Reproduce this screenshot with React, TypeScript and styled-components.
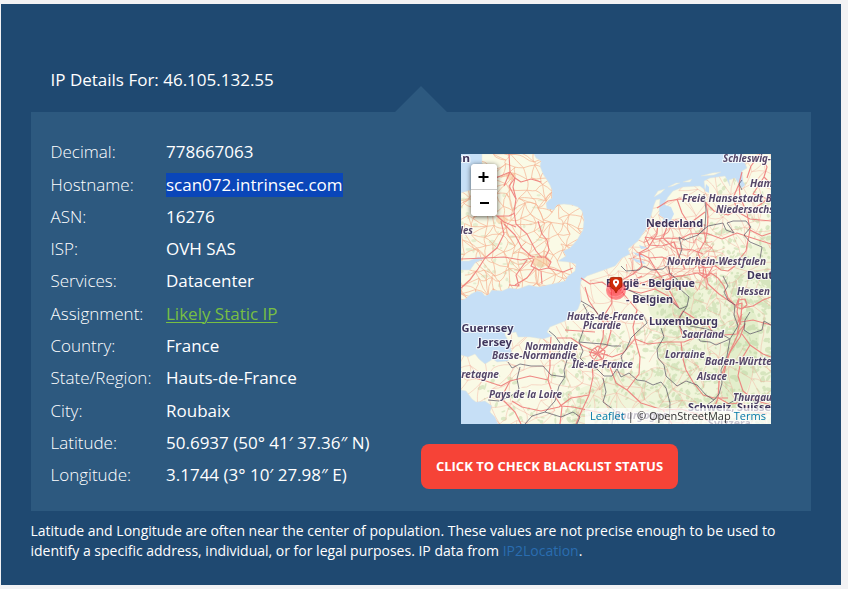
import React from "react";
import styled, { createGlobalStyle, css } from "styled-components";

const GlobalStyle = createGlobalStyle`
  * { box-sizing: border-box; }
  html, body { margin: 0; padding: 0; background: #f2f2f4; }
  body { font-family: "Open Sans", "Noto Sans", sans-serif; color: #fff; }
`;

const Page = styled.main`
  width: 848px;
  height: 589px;
  padding: 4px 7px 4px 1px;
  overflow: hidden;
`;

const Section = styled.section`
  height: 581px;
  padding: 0 30px;
  background: #1f4971;
`;

const Heading = styled.h1`
  height: 108px;
  margin: 0;
  padding: 64px 0 0 19.5px;
  font-size: 17px;
  line-height: 24px;
  font-weight: 400;
  white-space: nowrap;
`;

const Panel = styled.div`
  position: relative;
  display: flex;
  height: 399px;
  background: #2d597f;

  &::before {
    content: "";
    position: absolute;
    left: 364px;
    top: -26px;
    border: solid transparent;
    border-width: 0 26px 26px;
    border-bottom-color: #2d597f;
  }
`;

const Details = styled.dl`
  width: 390px;
  margin: 0;
  padding: 24px 0 0 19.5px;
`;

const Row = styled.div`
  display: grid;
  grid-template-columns: 115.5px 1fr;
  height: 32.3px;
  align-items: center;
  font-size: 17px;
  line-height: 24px;
  white-space: nowrap;

  &:nth-child(2) {
    padding-top: 1px;
  }
`;

const Term = styled.dt`
  font-weight: 300;
`;

const Value = styled.dd`
  margin: 0;
`;

const Text = styled.span<{ $kind?: "selected" | "link" }>`
  ${({ $kind }) =>
    $kind === "selected" &&
    css`
      display: block;
      width: 177px;
      background: #0a46b9;
    `}
  ${({ $kind }) =>
    $kind === "link" &&
    css`
      color: #78bf43;
      text-decoration: underline;
      text-decoration-thickness: 1px;
      text-underline-offset: 2px;
    `}
`;

const MapColumn = styled.div`
  display: flex;
  flex-direction: column;
  align-items: flex-start;
  padding-top: 42px;
`;

const MapFrame = styled.div`
  position: relative;
  width: 310px;
  height: 270px;
  margin-left: 40px;
  overflow: hidden;
  background: #c6dff6;
`;

const MapSvg = styled.svg`
  display: block;
`;

const ZoomBar = styled.div`
  position: absolute;
  left: 10px;
  top: 10px;
  width: 26px;
  border-radius: 4px;
  overflow: hidden;
  background: #fff;
  box-shadow: 0 1px 5px rgba(0, 0, 0, 0.65);
`;

const ZoomButton = styled.button`
  display: flex;
  width: 26px;
  height: 26px;
  padding: 0;
  align-items: center;
  justify-content: center;
  border: 0;
  background: #fff;

  &:first-child {
    border-bottom: 1px solid #ccc;
  }
`;

const Attribution = styled.div`
  position: absolute;
  right: 0;
  bottom: 0;
  height: 16px;
  width: 186px;
  padding: 0 5px;
  display: flex;
  justify-content: space-between;
  background: rgba(255, 255, 255, 0.7);
  color: #333;
  font-size: 11px;
  line-height: 16px;
  white-space: nowrap;

  a {
    color: #0078a8;
    text-decoration: none;
  }
`;

const CheckButton = styled.button`
  width: 257px;
  height: 45px;
  margin-top: 20px;
  padding: 0;
  border: 0;
  border-radius: 8px;
  background: #f64337;
  color: #fff;
  font: 700 13px/45px "Open Sans", sans-serif;
  white-space: nowrap;
`;

const Note = styled.p`
  margin: 0 0 0 -0.5px;
  padding-top: 10px;
  font-size: 14px;
  line-height: 20px;
  white-space: nowrap;

  a {
    color: #2a6db0;
    text-decoration: none;
  }
`;

type Detail = { term: string; value: string; kind?: "selected" | "link" };

const details: Detail[] = [
  { term: "Decimal:", value: "778667063" },
  { term: "Hostname:", value: "scan072.intrinsec.com", kind: "selected" },
  { term: "ASN:", value: "16276" },
  { term: "ISP:", value: "OVH SAS" },
  { term: "Services:", value: "Datacenter" },
  { term: "Assignment:", value: "Likely Static IP", kind: "link" },
  { term: "Country:", value: "France" },
  { term: "State/Region:", value: "Hauts-de-France" },
  { term: "City:", value: "Roubaix" },
  { term: "Latitude:", value: "50.6937 (50° 41′ 37.36″ N)" },
  { term: "Longitude:", value: "3.1744 (3° 10′ 27.98″ E)" },
];

const britain =
  "M21 0L73 0 75 4 80 7 79 12 82 20 86 26 89 31 91 36 91 44 88 46 85 49 86 55 93 56 96 51 103 50 111 51 117 53 121 57 123 66 122 76 116 86 109 94 102 97 105 102 97 107 107 108 115 110 114 117 107 122 104 127 91 130 77 133 68 131 57 135 48 134 41 137 31 136 28 140 24 142 21 138 16 137 10 140 4 145 0 146 0 116 9 116 14 109 24 104 17 103 8 107 0 107 0 39 10 36 22 36 21 20Z";
const continent =
  "M282 0L310 0 310 270 37 270 34 263 29 258 31 252 24 247 15 248 11 245 5 237 0 236 0 201 7 203 14 200 18 205 24 210 32 205 36 208 47 207 51 200 49 190 44 181 44 177 50 179 55 178 57 183 69 183 82 185 91 182 86 178 89 173 104 167 117 155 120 147 119 135 120 127 126 122 140 117 154 112 161 104 169 100 167 95 177 87 187 72 190 62 193 51 195 46 199 45 198 57 202 60 209 57 203 50 207 43 212 37 222 33 239 32 244 36 243 27 249 24 264 22 269 32 268 26 274 24 277 29 282 26 281 17 286 14 283 7Z";

/** Small deterministic generator so that the road mesh is the same on each render. */
function seeded(seed: number) {
  let s = seed;
  return () => {
    s = (s * 16807) % 2147483647;
    return s / 2147483647;
  };
}

/** A wavy mesh linking each cell of a jittered grid to its neighbours. */
function roadMesh(step: number, seed: number, keep: number) {
  const rnd = seeded(seed);
  const cols = Math.ceil(310 / step) + 2;
  const rows = Math.ceil(270 / step) + 2;
  const pts: [number, number][][] = [];
  for (let r = 0; r < rows; r++) {
    pts.push([]);
    for (let c = 0; c < cols; c++) {
      pts[r].push([
        (c - 0.5 + (rnd() - 0.5) * 0.95) * step,
        (r - 0.5 + (rnd() - 0.5) * 0.95) * step,
      ]);
    }
  }
  let d = "";
  const link = (a: [number, number], b: [number, number]) => {
    if (rnd() > keep) return;
    const mx = (a[0] + b[0]) / 2 + (rnd() - 0.5) * step * 0.6;
    const my = (a[1] + b[1]) / 2 + (rnd() - 0.5) * step * 0.6;
    d += `M${a[0].toFixed(1)} ${a[1].toFixed(1)}Q${mx.toFixed(1)} ${my.toFixed(1)} ${b[0].toFixed(1)} ${b[1].toFixed(1)}`;
  };
  for (let r = 0; r < rows - 1; r++) {
    for (let c = 0; c < cols - 1; c++) {
      link(pts[r][c], pts[r][c + 1]);
      link(pts[r][c], pts[r + 1][c]);
      if (rnd() > 0.5) link(pts[r][c], pts[r + 1][c + 1]);
      else link(pts[r + 1][c], pts[r][c + 1]);
    }
  }
  return d;
}

function scatter(n: number, seed: number, x0: number, y0: number, w: number, h: number) {
  const rnd = seeded(seed);
  return Array.from({ length: n }, () => ({
    x: x0 + rnd() * w,
    y: y0 + rnd() * h,
    rx: 0.8 + rnd() * 3,
    ry: 0.6 + rnd() * 1.6,
    a: rnd() * 180,
  }));
}

const britishRoads = roadMesh(9.5, 77, 0.8);
const minorRoads = roadMesh(14, 913, 0.6);
const denseRoads = roadMesh(9, 421, 0.7);
const woods = [
  ...scatter(620, 31, 195, 122, 115, 148),
  ...scatter(210, 87, 100, 175, 110, 95),
  ...scatter(90, 53, 235, 75, 75, 55),
  ...scatter(70, 67, 0, 40, 80, 95),
  ...scatter(40, 19, 250, 25, 60, 60),
  ...scatter(50, 41, 20, 210, 90, 60),
];

const motorways = [
  // Great Britain
  "M48 0L49 18 54 24 52 33 55 45 53 58 55 70 66 80 75 97 81 104",
  "M49 18L37 23 31 27M54 24L60 28 70 25 80 28M49 18L43 32M54 24L48 32 55 45",
  "M36 62L43 68 55 73M36 62L48 62 54 59M40 67L43 80 36 94 24 104 17 115 9 126 0 134",
  "M43 70L54 81 61 94 70 102 74 103M77 67L81 80 86 86 88 96 84 104M0 105L24 104 43 103 60 106 72 104",
  "M73 105L70 112 78 116 87 114 90 108 84 103 76 103M87 114L102 118 112 114M74 113L66 124 54 131M80 117L81 130M66 106L55 121 58 132 48 131",
  // Netherlands, Belgium and northern Germany
  "M187 75L197 67 207 70 215 66 228 70 244 58M197 67L196 80 187 94 178 99M207 70L202 84 213 94 232 96 242 100",
  "M196 54L207 47 219 45 233 46 244 48 253 57 267 61 278 55M216 45L221 59 228 70M245 48L247 62 246 78 244 87 237 99 242 113",
  "M184 83L195 85 207 84 219 85 229 80 245 79 261 85 276 79 288 83 310 90M184 83L188 91 201 92 213 88 218 102 224 115",
  "M178 99L188 104 201 103 213 108 224 109 233 107 244 114M178 99L181 112 172 120 161 126M188 104L195 116 203 127 213 123 226 121 237 119",
  "M281 18L278 30 279 43 286 59 289 76 285 97 276 108M278 30L272 44 277 58 289 65 310 67M286 59L300 50 310 42M289 76L301 82 310 79",
  "M301 3L306 13 303 23 310 30M299 0L290 12 286 24M303 23L292 40 310 46",
  "M244 107L252 110 260 116 267 117 275 111M237 119L244 124 250 119 257 124 263 132 267 144 274 151M244 114L247 130 258 140 274 151",
  // France
  "M120 124L129 130 141 128 151 135 162 130 172 132 184 128 195 124 211 119",
  "M124 133L128 147 134 156 143 169 142 184 137 198M150 133L151 149 144 160 150 177 146 192 137 200 128 198M155 131L166 144 176 156 172 173 174 185",
  "M137 200L131 209 132 223 128 241 121 256 115 270M137 198L151 203 162 199 174 185 187 190 205 188 223 188 240 181 253 178",
  "M137 199L122 192 110 184 96 184M90 183L89 197 89 213 87 226 91 238 101 253 99 270M87 226L69 222 49 227 40 232 22 226 0 221",
  "M128 241L110 244 98 253 80 257 61 253 51 247M100 252L112 253 126 256 146 260M49 227L40 244 54 258 60 270M104 176L119 177 134 178",
  "M137 201L149 213 155 229 166 236 180 249 202 256 211 270M174 185L179 203 178 220 166 236M220 188L222 205 225 216 232 228 242 241 253 244 267 244",
  "M253 178L263 181 276 180 284 170 279 183 269 198 264 212 258 228 257 244 251 260M276 180L280 164 281 149 274 151M281 180L289 191 302 200 310 203",
  // Southern Germany and the Alps
  "M278 144L276 158 280 171M281 154L292 152 302 146 310 143M280 168L292 166 310 171M289 191L280 206 277 222 282 237 293 246 310 251",
  "M256 243L268 250 279 249 291 257 306 260M202 256L220 255 236 260 252 270M252 179L247 171 233 164 222 157 217 166 221 180",
  "M161 126L166 136 180 139 194 135 207 142 218 154M211 119L207 134 218 154M155 134L169 128 181 122",
];

const borders = [
  "M160 112L165 117 178 116 183 112 190 116 202 115 207 111 209 120 216 125 219 135 228 143 226 152 219 155 211 148 200 148 193 142 181 142 170 137 161 133 149 134",
  "M243 40L245 56 244 74 237 81 223 86 218 83 221 95 217 106 209 111",
  "M237 81L247 72 262 69 265 76 273 79 266 69 272 67 285 67 290 73 283 81 289 88 301 93 299 105",
  "M281 26L278 30 281 36M226 152L219 163 219 173 224 181 235 178 239 187 249 188 255 191 269 185 262 181 249 176 240 174 229 172",
  "M269 185L277 172 273 161 274 151 267 146 263 138 267 132 262 122",
  "M120 147L127 151 133 155 139 163 146 166M122 150L126 157 124 170 121 180 118 188 129 189 142 190 151 192 160 192",
  "M118 188L122 197 119 204 127 212 136 215 143 222 151 222 156 215 162 210 160 202 165 196 170 184 176 178 186 169 182 161",
  "M88 177L94 182 101 192 97 200 106 206 103 216 104 223 98 232 94 247 84 258 71 262 64 270",
  "M47 208L51 214 59 210 70 212 82 212 90 221 104 223M59 213L56 225 58 235 50 242 38 247 27 246",
  "M156 215L160 223 168 219 176 226 184 227 192 231 200 228 205 234 209 249 208 270",
  "M200 174L203 183 196 195 197 204 203 211 205 222 216 232 225 227 236 231 245 241 253 246 258 240 261 229 260 216 266 202 269 185",
  "M253 246L246 251 257 255 267 250 276 245 284 243 296 248 310 244M142 224L145 238 142 248 153 256 151 270",
  "M289 158L284 166 283 176 289 180 301 176 303 167 310 171M84 258L100 263 112 258 119 263 116 270M146 126L151 130 149 134",
];

type Label = { text: string; x: number; y: number; w: number; plain?: boolean };

const labels: Label[] = [
  { text: "an", x: -6, y: 8, w: 15, plain: true },
  { text: "Schleswig-", x: 262, y: 8, w: 48 },
  { text: "Ham", x: 289, y: 33, w: 23 },
  { text: "Freie Hansestadt B", x: 221, y: 48, w: 90 },
  { text: "Niedersachs", x: 255, y: 59, w: 58 },
  { text: "Nederland", x: 185, y: 73, w: 57, plain: true },
  { text: "les", x: -1, y: 80, w: 13 },
  { text: "Nordrhein-Westfalen", x: 206, y: 111, w: 99 },
  { text: "Deut", x: 286, y: 125, w: 26, plain: true },
  { text: "België - Belgique", x: 145, y: 133, w: 89, plain: true },
  { text: "Hessen", x: 276, y: 141, w: 33 },
  { text: "- Belgien", x: 165, y: 149, w: 47, plain: true },
  { text: "Hauts-de-France", x: 106, y: 166, w: 77 },
  { text: "Picardie", x: 122, y: 175, w: 38 },
  { text: "Luxembourg", x: 188, y: 171, w: 69, plain: true },
  { text: "Guernsey", x: 0.5, y: 178, w: 52, plain: true },
  { text: "Jersey", x: 17, y: 192, w: 34, plain: true },
  { text: "Saarland", x: 221, y: 184, w: 42 },
  { text: "Normandie", x: 64, y: 196, w: 53 },
  { text: "Basse-Normandie", x: 31, y: 205, w: 84 },
  { text: "Île-de-France", x: 111, y: 214, w: 61 },
  { text: "Lorraine", x: 204, y: 204, w: 40 },
  { text: "Baden-Württe", x: 244, y: 211, w: 67 },
  { text: "Bretagne", x: -6, y: 224, w: 44 },
  { text: "Alsace", x: 236, y: 226, w: 30 },
  { text: "Pays de la Loire", x: 28, y: 244, w: 73 },
  { text: "Thurgau", x: 272, y: 247, w: 39 },
  { text: "Schweiz, Suisse,", x: 227, y: 257, w: 86, plain: true },
  { text: "Svizzera", x: 247, y: 273, w: 43, plain: true },
  { text: "Bourgogne", x: 153, y: 265, w: 54 },
];

function EuropeMap() {
  return (
    <MapSvg width="310" height="270" viewBox="0 0 310 270" role="img" aria-label="Map of north-west Europe">
      <defs>
        <clipPath id="british-land">
          <path d={britain} />
        </clipPath>
        <clipPath id="continental-land">
          <path d={continent} />
        </clipPath>
        <clipPath id="low-countries">
          <path d="M165 110L172 95 190 67 213 72 245 70 256 100 256 135 212 137 166 131Z" />
        </clipPath>
        <radialGradient id="accuracy">
          <stop offset="0" stopColor="#ff2630" />
          <stop offset="0.65" stopColor="#ff3040" stopOpacity="0.85" />
          <stop offset="1" stopColor="#ff3040" stopOpacity="0.65" />
        </radialGradient>
      </defs>
      <rect width="310" height="270" fill="#c6dff6" />
      <g fill="#fafae6" stroke="#e0e5dd" strokeWidth="0.5">
        <path d={britain} />
        <path d={continent} />
        <path d="M193 43L197 37 204 35 200 39ZM207 33L215 29 219 29 212 32ZM222 28L231 25 229 28ZM240 22L251 19 260 18 253 21Z" />
      </g>
      <g clipPath="url(#continental-land)">
        <path d="M310 70V270H110L118 235 150 222 195 215 198 175 212 145 235 128 262 130 280 105Z" fill="#e9f2d2" opacity="0.6" />
        <ellipse cx="279" cy="205" rx="16" ry="50" fill="#cfe3b4" opacity="0.4" transform="rotate(12 279 205)" />
        <ellipse cx="214" cy="151" rx="27" ry="22" fill="#d4e6ba" opacity="0.4" />
      </g>
      <g fill="#b4d09a" opacity="0.42" clipPath="url(#continental-land)">
        {woods.map((w, i) => (
          <ellipse key={i} cx={w.x} cy={w.y} rx={w.rx} ry={w.ry} transform={`rotate(${w.a} ${w.x} ${w.y})`} />
        ))}
      </g>
      <g clipPath="url(#british-land)" fill="none">
        <g fill="#cfe0b8" opacity="0.5">
          {woods.map((w, i) => (
            <ellipse key={i} cx={w.x} cy={w.y} rx={w.rx} ry={w.ry} />
          ))}
        </g>
        <path d={britishRoads} stroke="#f5b090" strokeWidth="0.8" opacity="0.85" />
        <g fill="#f6c08f" opacity="0.5">
          <ellipse cx="80" cy="107" rx="9" ry="6" />
          <ellipse cx="41" cy="66" rx="6" ry="4" />
          <ellipse cx="50" cy="22" rx="5" ry="4" />
        </g>
      </g>
      <g clipPath="url(#continental-land)" fill="none">
        <path d={minorRoads} stroke="#f2a595" strokeWidth="0.65" opacity="0.6" />
        <path d={denseRoads} stroke="#ee7f76" strokeWidth="0.7" opacity="0.7" clipPath="url(#low-countries)" />
      </g>
      <g fill="#c6dff6">
        <path d="M204 51L210 53 213 60 209 68 204 72 200 69 203 64 198 61 199 55Z" />
        <path d="M171 98L179 100 184 104 177 102ZM171 104L182 107 185 110 175 108ZM178 91L187 94 180 95Z" />
        <path d="M245 30L248 33 248 39 244 37ZM281 25L284 31 281 34 278 29Z" />
      </g>
      <g fill="none" stroke="#ee7a78" strokeWidth="1.15" strokeLinejoin="round" opacity="0.88">
        {motorways.map((d) => (
          <path key={d} d={d} />
        ))}
        <path d="M131 196L137 192 144 197 142 205 134 207 129 201ZM132 202L142 196M134 194L141 205M128 198L147 201" />
        <path d="M237 108L245 105 252 112 247 121 239 119ZM243 106L242 122M237 114L252 113" />
        <path d="M277 146L284 145 286 151 281 155 275 153ZM281 160L276 170M278 178L267 202 262 224" />
      </g>
      <g fill="none" stroke="#595365" strokeWidth="0.95" strokeLinejoin="round" opacity="0.75">
        {borders.map((d) => (
          <path key={d} d={d} />
        ))}
      </g>
      <g fontFamily="Noto Sans" fontWeight="700" paintOrder="stroke" stroke="#fff" strokeOpacity="0.7" strokeWidth="2.2" strokeLinejoin="round">
        {labels.map((l) => (
          <text
            key={l.text}
            x={l.x}
            y={l.y}
            textLength={l.w}
            lengthAdjust="spacingAndGlyphs"
            fontSize={l.plain ? 11.2 : 10}
            fontStyle={l.plain ? "normal" : "italic"}
            fill={l.plain ? "#40365c" : "#554769"}
          >
            {l.text}
          </text>
        ))}
      </g>
      <circle cx="155" cy="136" r="10" fill="url(#accuracy)" opacity="0.78" />
      <g fill="none" stroke="#ff9a9a" strokeWidth="0.9" opacity="0.8">
        <path d="M146 139L150 142 155 143 160 141 164 137M147 133L150 138M163 133L160 138" />
      </g>
      <path d="M150.5 123.5h9q1.5 0 1.5 1.5v7.5l-4.5 3.5-1.5 3-1.5-3-4.5-3.5v-7.5q0-1.500 1.500-1.500Z" fill="#cf2a08" stroke="#a51e05" strokeWidth="0.8" />
      <path d="M155 125.200a3.100 3.100 0 0 1 3.100 3.100c0 1.800-1.800 3-3.100 5.200c-1.300-2.200-3.100-3.400-3.100-5.200a3.100 3.100 0 0 1 3.100-3.100Z" fill="#fff" />
      <circle cx="155" cy="128.2" r="1.1" fill="#cf2a08" />
    </MapSvg>
  );
}

export default function App() {
  return (
    <>
      <GlobalStyle />
      <Page>
        <Section>
          <Heading>IP Details For: 46.105.132.55</Heading>
          <Panel>
            <Details>
              {details.map((d) => (
                <Row key={d.term}>
                  <Term>{d.term}</Term>
                  <Value>
                    <Text $kind={d.kind}>{d.value}</Text>
                  </Value>
                </Row>
              ))}
            </Details>
            <MapColumn>
              <MapFrame>
                <EuropeMap />
                <ZoomBar>
                  <ZoomButton aria-label="Zoom in">
                    <svg width="12" height="12" viewBox="0 0 12 12">
                      <path d="M5.500 1v10M0.500 6h10" stroke="#000" strokeWidth="2" />
                    </svg>
                  </ZoomButton>
                  <ZoomButton aria-label="Zoom out">
                    <svg width="12" height="12" viewBox="0 0 12 12">
                      <path d="M2 6h9" stroke="#000" strokeWidth="2" />
                    </svg>
                  </ZoomButton>
                </ZoomBar>
                <Attribution>
                  <a>Leaflet</a>
                  <span>|</span>
                  <span>© OpenStreetMap</span>
                  <a>Terms</a>
                </Attribution>
              </MapFrame>
              <CheckButton>CLICK TO CHECK BLACKLIST STATUS</CheckButton>
            </MapColumn>
          </Panel>
          <Note>
            Latitude and Longitude are often near the center of population. These values are not precise enough to be used to
            <br />
            identify a specific address, individual, or for legal purposes. IP data from <a>IP2Location</a>.
          </Note>
        </Section>
      </Page>
    </>
  );
}
